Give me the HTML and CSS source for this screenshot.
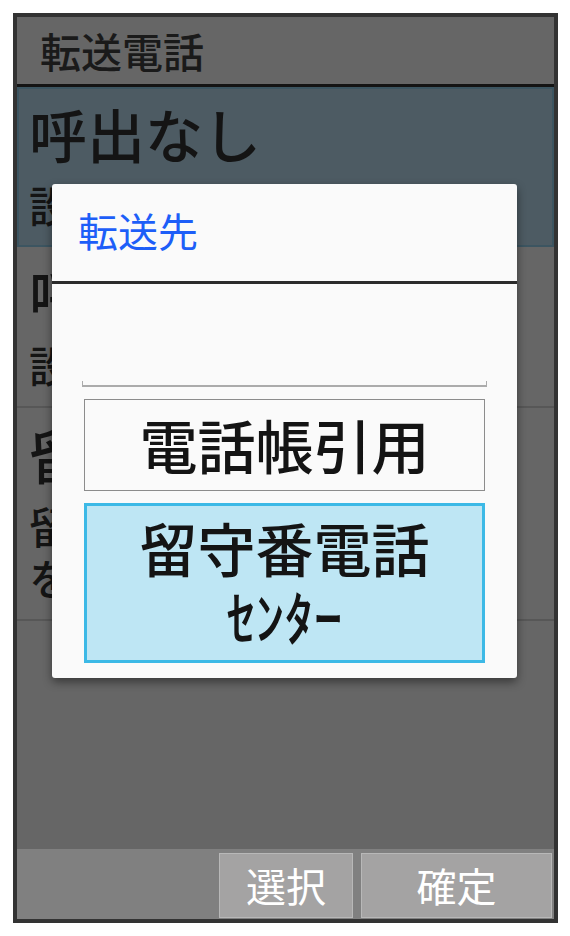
FILE: index.html
```html
<!DOCTYPE html>
<html lang="ja">
<head>
<meta charset="utf-8">
<link rel="stylesheet" href="styles.css">
</head>
<body>
<div class="phone">
  <div class="header">転送電話</div>
  <div class="list">
    <div class="item selected">
      <div class="title">呼出なし</div>
      <div class="sub">設定されていません</div>
    </div>
    <div class="item">
      <div class="title">呼出あり</div>
      <div class="sub">設定されていません</div>
    </div>
    <div class="item">
      <div class="title">留守番電話</div>
      <div class="sub">留守番電話センターへ</div>
      <div class="sub">を転送します</div>
    </div>
  </div>
  <div class="softkeys">
    <div class="key key-select">選択</div>
    <div class="key key-ok">確定</div>
  </div>

  <div class="dialog">
    <div class="dialog-title">転送先</div>
    <div class="dialog-body">
      <div class="input"><div class="underline"></div></div>
      <div class="btn btn-book">電話帳引用</div>
      <div class="btn btn-center">
        <span class="big">留守番電話</span>
        <span class="small">ｾﾝﾀｰ</span>
      </div>
    </div>
  </div>
</div>
</body>
</html>
```
FILE: styles.css
```css
* { box-sizing: border-box; }
html, body { margin: 0; padding: 0; background: #ffffff; }
body {
  font-family: "Noto Sans CJK JP", "Noto Sans", sans-serif;
  font-weight: 500;
  color: #141414;
}
.phone {
  position: relative;
  margin: 13px 0 0 13px;
  width: 545px;
  height: 910px;
  border: 4px solid #333333;
  background: #666666;
  display: flex;
  flex-direction: column;
  overflow: hidden;
}
.header {
  height: 70px;
  padding-left: 23px;
  font-size: 41px;
  line-height: 66px;
  color: #1a1a1a;
  border-bottom: 3px solid #141414;
  flex: none;
}
.list { flex: 1; }
.item {
  padding: 13px 0 16px 12px;
  border-bottom: 2px solid #575757;
  white-space: nowrap;
  overflow: hidden;
}
.item.selected {
  background: #4d5b63;
  border: 2px solid #3c5561;
  padding: 11px 0 15px 10px;
}
.title { font-size: 58px; line-height: 66px; }
.sub { font-size: 43px; line-height: 52px; }
.title + .sub { margin-top: 12px; }
.softkeys {
  flex: none;
  height: 70px;
  background: #808080;
  display: flex;
  justify-content: flex-end;
  gap: 8px;
  padding: 4px 2px 1px 0;
}
.key {
  background: #a4a3a3;
  border: 1px solid #b8b8b8;
  color: #ffffff;
  font-size: 40px;
  font-weight: 400;
  line-height: 62px;
  text-align: center;
}
.key-select { width: 134px; }
.key-ok { width: 191px; }

.dialog {
  position: absolute;
  left: 35px;
  top: 167px;
  width: 465px;
  height: 494px;
  background: #fafafa;
  border-radius: 3px;
  box-shadow: 0 4px 10px rgba(0,0,0,0.45);
  display: flex;
  flex-direction: column;
}
.dialog-title {
  height: 100px;
  padding: 17px 0 0 26px;
  font-size: 40px;
  font-weight: 400;
  line-height: 58px;
  color: #1d5ef8;
  border-bottom: 3px solid #2b2b2b;
  flex: none;
}
.dialog-body {
  padding: 0 32px 15px;
  display: flex;
  flex-direction: column;
  gap: 12px;
  flex: 1;
}
.input {
  height: 103px;
  margin: 0 -2px;
  display: flex;
  align-items: flex-end;
}
.underline {
  width: 100%;
  height: 6px;
  border: 1px solid #ababab;
  border-top: none;
  border-bottom-width: 2px;
}
.btn {
  color: #141414;
  text-align: center;
}
.btn-book {
  height: 92px;
  border: 1px solid #8c8c8c;
  background: #fafafa;
  font-size: 58px;
  line-height: 88px;
}
.btn-center {
  height: 160px;
  border: 3px solid #3cb9e6;
  background: #bee6f4;
  display: flex;
  flex-direction: column;
  align-items: center;
  padding-top: 6px;
}
.btn-center .big { font-size: 58px; line-height: 70px; }
.btn-center .small { font-size: 58px; line-height: 66px; }
```
